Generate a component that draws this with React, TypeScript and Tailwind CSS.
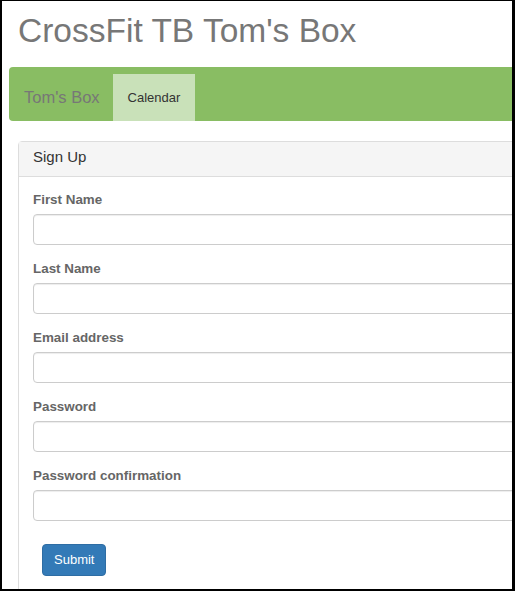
import React from 'react';

export default function App() {
  const fields = [
    { label: "First Name", type: "text" },
    { label: "Last Name", type: "text" },
    { label: "Email address", type: "email" },
    { label: "Password", type: "password" },
    { label: "Password confirmation", type: "password" },
  ];

  return (
    <div className="w-[515px] h-[591px] overflow-hidden bg-white border-l-2 border-t border-r-[3px] border-b-2 border-black font-['Liberation_Sans',Arial,sans-serif]">
      <div className="w-[760px]">

        {/* Page title */}
        <h1 className="ml-[16px] mt-[12px] text-[33.5px] leading-[36px] text-[#777] font-normal">
          CrossFit TB Tom's Box
        </h1>

        {/* Navbar */}
        <nav className="ml-[7px] mt-[18px] h-[54px] flex items-end bg-[#89bd63] rounded-l-[4px]">
          <div className="w-[104px] h-[47px] flex items-center pl-[15px] pb-[2px] text-[16.5px] leading-[20px] text-[#777]">
            Tom's Box
          </div>
          <div className="w-[82px] h-[47px] flex items-center justify-center bg-[#c9e1b9] text-[13px] leading-[18px] text-[#333]">
            Calendar
          </div>
        </nav>

        {/* Sign up panel */}
        <div className="ml-[16px] mt-[20px] border border-[#ddd] rounded-tl-[4px] bg-white">
          <div className="bg-[#f5f5f5] border-b border-[#ddd] pl-[14px] pt-[5px] pb-[9px] text-[15px] leading-[20px] text-[#333]">
            Sign Up
          </div>
          <div className="px-[14px] pt-[14px] pb-[20px]">
            {fields.map((f) => (
              <div key={f.label} className="mb-[15px]">
                <label className="block mb-[5px] text-[13.4px] leading-[18px] font-bold text-[#666]">
                  {f.label}
                </label>
                <input
                  type={f.type}
                  className="block w-full h-[31px] border border-[#ccc] rounded-[4px] bg-white shadow-[inset_0_1px_1px_rgba(0,0,0,0.075)]"
                />
              </div>
            ))}
            <div className="pt-[8px] pl-[9px]">
              <button className="h-[32px] px-[11px] bg-[#337ab7] border border-[#2e6da4] rounded-[4px] text-white text-[13px] leading-[18px]">
                Submit
              </button>
            </div>
          </div>
        </div>

      </div>
    </div>
  );
}
